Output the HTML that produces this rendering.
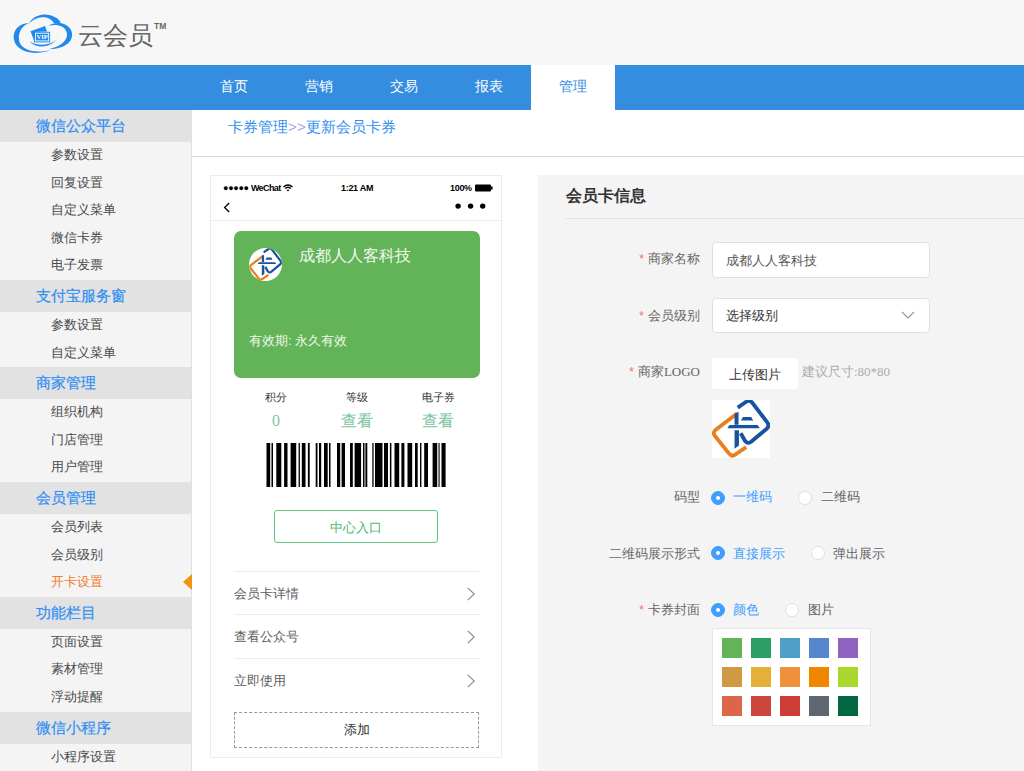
<!DOCTYPE html>
<html><head><meta charset="utf-8">
<style>
*{margin:0;padding:0;box-sizing:border-box}
html,body{width:1024px;height:771px;overflow:hidden;background:#fff;font-family:"Liberation Sans",sans-serif;color:#333}
.a{position:absolute}
#hdr{position:absolute;left:0;top:0;width:1024px;height:65px;background:#f7f7f7}
#brand{position:absolute;left:78px;top:19px;font-size:25px;line-height:32px;color:#666;white-space:nowrap}
#tm{position:absolute;left:154px;top:21px;font-size:8.5px;line-height:10px;color:#666;font-weight:bold}
#nav{position:absolute;left:0;top:65px;width:1024px;height:45px;background:#358de0}
.tab{position:absolute;top:0;width:85px;height:45px;line-height:43px;text-align:center;color:#fff;font-size:14px}
.tab.on{background:#fff;color:#358de0;width:84px}
#side{position:absolute;left:0;top:110px;width:192px;height:661px;background:#f4f4f4;border-right:1px solid #e0e0e0}
.sh{height:32px;line-height:31px;background:#e2e2e2;color:#2f8ef4;font-size:15px;font-weight:500;-webkit-text-stroke:0.2px #2f8ef4;padding-left:36px}
.si{height:27.6px;line-height:26.2px;font-size:13px;color:#4a4a4a;padding-left:51px}
.si.act{color:#f27d28}
#tri{position:absolute;left:183px;top:574px;width:0;height:0;border-right:9px solid #f39313;border-top:8.5px solid transparent;border-bottom:8.5px solid transparent}
#crumb{position:absolute;left:228px;top:117px;font-size:15.3px;color:#3490ee;line-height:20px;white-space:nowrap}
#hr{position:absolute;left:192px;top:156px;width:832px;height:1px;background:#d6d6d6}
#phone{position:absolute;left:210px;top:175px;width:292px;height:583px;border:1px solid #ececec;background:#fff}
.sb{position:absolute;top:6px;font-size:9px;line-height:12px;color:#000;font-weight:bold;letter-spacing:-0.3px;white-space:nowrap}
#card{position:absolute;left:23px;top:55px;width:246px;height:147px;background:#63b359;border-radius:7px}
.lst{position:absolute;left:23px;width:245px;height:44px;border-top:1px solid #ececec;font-size:13px;line-height:43px;color:#606060}
.chev{position:absolute;right:4.5px;top:14.5px}
#panel{position:absolute;left:538px;top:175px;width:486px;height:596px;background:#f4f4f4}
.lbl{position:absolute;font-size:13px;color:#666;line-height:16px;text-align:right;white-space:nowrap}
.req{color:#f56c6c;margin-right:4px;font-size:12px}
.inp{position:absolute;left:174px;width:218px;background:#fff;border:1px solid #dcdfe6;border-radius:4px;font-size:13px;color:#555;padding-left:13px;white-space:nowrap}
.rad{position:absolute;width:14px;height:14px;border-radius:50%;border:1px solid #dcdfe6;background:#fff}
.rad.on{background:#409eff;border-color:#409eff}
.rad.on:after{content:"";position:absolute;left:4px;top:4px;width:4px;height:4px;border-radius:50%;background:#fff}
.rt{position:absolute;font-size:13px;line-height:16px;color:#606266;white-space:nowrap}
.rt.on{color:#409eff}
.sw{position:absolute;width:20px;height:20px}
</style></head><body>
<div id="hdr">
 <svg class="a" style="left:10px;top:10px" width="66" height="48" viewBox="0 0 1024 745">
  <g fill="#2089ee">
  <path d="M300,200 C120,205 40,330 60,455 C85,610 300,735 625,625 C330,685 145,600 138,450 C130,320 200,235 300,200 Z"/>
  <path d="M290,215 C350,100 470,65 560,70 C680,80 760,140 790,195 L690,215 C650,140 580,112 510,112 C420,115 340,160 290,215 Z"/>
  <path d="M600,245 C700,180 890,180 955,330 C1000,470 880,600 600,610 C820,560 905,450 880,350 C850,240 720,215 600,245 Z"/>
  <path d="M308,488 C400,600 660,610 748,405 C705,545 450,580 308,488 Z"/>
  <path d="M318,330 L545,248 L575,335 L380,340 L372,470 Z"/>
  <rect x="372" y="338" width="250" height="165"/>
  </g>
  <rect x="395" y="360" width="205" height="120" fill="none" stroke="#fff" stroke-width="14"/>
  <text x="498" y="455" font-size="100" font-weight="bold" fill="#fff" text-anchor="middle" font-family="Liberation Serif">VIP</text>
 </svg>
 <div id="brand">云会员</div><div id="tm">TM</div>
</div>
<div id="nav">
 <div class="tab" style="left:191px">首页</div>
 <div class="tab" style="left:276px">营销</div>
 <div class="tab" style="left:361px">交易</div>
 <div class="tab" style="left:446px">报表</div>
 <div class="tab on" style="left:531px">管理</div>
</div>
<div id="side">
 <div class="sh">微信公众平台</div>
 <div class="si">参数设置</div><div class="si">回复设置</div><div class="si">自定义菜单</div><div class="si">微信卡券</div><div class="si">电子发票</div>
 <div class="sh">支付宝服务窗</div>
 <div class="si">参数设置</div><div class="si">自定义菜单</div>
 <div class="sh">商家管理</div>
 <div class="si">组织机构</div><div class="si">门店管理</div><div class="si">用户管理</div>
 <div class="sh">会员管理</div>
 <div class="si">会员列表</div><div class="si">会员级别</div><div class="si act">开卡设置</div>
 <div class="sh">功能栏目</div>
 <div class="si">页面设置</div><div class="si">素材管理</div><div class="si">浮动提醒</div>
 <div class="sh">微信小程序</div>
 <div class="si">小程序设置</div>
</div>
<div id="tri"></div>
<div id="crumb">卡券管理<span style="color:#a9a3e6">&gt;&gt;</span>更新会员卡券</div>
<div id="hr"></div>

<svg width="0" height="0" style="position:absolute"><defs>
 <symbol id="klogo" viewBox="25 25 721 721">
  <path d="M340,190 L72,395 Q28,430 62,472 L238,692 Q272,735 316,702 L450,612" stroke="#e8801f" stroke-width="48" fill="none"/>
  <path d="M345,120 L450,47 Q490,20 524,57 L710,300 Q745,345 705,382 L515,542 Q470,578 436,535 L382,438" stroke="#17539f" stroke-width="48" fill="none"/>
  <path d="M305,200 L355,172 L355,332 L305,332 Z M215,375 L242,336 L592,336 L620,375 Z M305,400 L360,400 L360,592 L305,632 Z M385,280 L410,235 L512,235 L538,280 Z" fill="#17539f"/>
 </symbol>
</defs></svg>

<div id="phone">
 <div class="sb" style="left:12px">●●●●● <span style="letter-spacing:-0.6px">WeChat</span></div>
 <svg class="a" style="left:72px;top:8px" width="10" height="8" viewBox="0 0 10 8"><path d="M0.5,3 Q5,-1 9.5,3" stroke="#000" stroke-width="1.4" fill="none"/><path d="M2.2,4.6 Q5,2 7.8,4.6" stroke="#000" stroke-width="1.4" fill="none"/><path d="M3.6,6 L5,7.6 L6.4,6 Q5,4.8 3.6,6Z" fill="#000"/></svg>
 <div class="sb" style="left:130px">1:21 AM</div>
 <div class="sb" style="left:239px">100%</div>
 <svg class="a" style="left:264px;top:8px" width="18" height="8" viewBox="0 0 18 8"><rect x="0" y="0.5" width="16" height="7" rx="1" fill="#000"/><rect x="16" y="2.5" width="1.6" height="3" fill="#000"/></svg>
 <svg class="a" style="left:12px;top:26px" width="8" height="11" viewBox="0 0 8 11"><path d="M6.2,1 L1.6,5.5 L6.2,10" stroke="#000" stroke-width="1.3" fill="none"/></svg>
 <svg class="a" style="left:244px;top:27px" width="32" height="7" viewBox="0 0 32 7"><circle cx="3.1" cy="3.1" r="2.7"/><circle cx="15.6" cy="3.1" r="2.7"/><circle cx="27.7" cy="3.1" r="2.7"/></svg>
 <div class="a" style="left:0;top:44px;width:290px;height:1px;background:#ececec"></div>
 <div id="card">
  <div class="a" style="left:15px;top:17px;width:33px;height:33px;border-radius:50%;background:#fff;overflow:hidden"><svg width="33" height="33" style="position:absolute;left:0;top:0"><use href="#klogo" x="0" y="0" width="33" height="33"/></svg></div>
  <div class="a" style="left:65px;top:15px;font-family:'Liberation Serif',serif;font-size:16px;line-height:20px;color:#f2f8ef;white-space:nowrap">成都人人客科技</div>
  <div class="a" style="left:15px;top:102px;font-size:13px;line-height:16px;color:#eef7ea;white-space:nowrap">有效期: 永久有效</div>
 </div>
 <div class="a" style="left:0;top:214px;width:290px;font-size:11px;line-height:14px;color:#333">
  <div class="a" style="left:40px;width:50px;text-align:center">积分</div>
  <div class="a" style="left:121px;width:50px;text-align:center">等级</div>
  <div class="a" style="left:202px;width:50px;text-align:center">电子券</div>
 </div>
 <div class="a" style="left:0;top:235px;width:290px;font-family:'Liberation Serif',serif;font-size:16px;line-height:20px;color:#7ac69f">
  <div class="a" style="left:40px;width:50px;text-align:center">0</div>
  <div class="a" style="left:121px;width:50px;text-align:center">查看</div>
  <div class="a" style="left:202px;width:50px;text-align:center">查看</div>
 </div>
 <svg class="a" style="left:55px;top:267px" width="182" height="44" viewBox="0 0 182 44" fill="#000"><rect x="0.5" y="0" width="3.7" height="44"/><rect x="5.5" y="0" width="1.5" height="44"/><rect x="10.3" y="0" width="5.0" height="44"/><rect x="18.1" y="0" width="3.4" height="44"/><rect x="24.6" y="0" width="5.6" height="44"/><rect x="32.6" y="0" width="1.3" height="44"/><rect x="35.8" y="0" width="3.7" height="44"/><rect x="41.9" y="0" width="1.8" height="44"/><rect x="49.7" y="0" width="1.8" height="44"/><rect x="53.0" y="0" width="2.2" height="44"/><rect x="58.0" y="0" width="3.7" height="44"/><rect x="63.0" y="0" width="1.5" height="44"/><rect x="71.0" y="0" width="3.2" height="44"/><rect x="75.6" y="0" width="3.4" height="44"/><rect x="84.0" y="0" width="2.8" height="44"/><rect x="88.6" y="0" width="6.5" height="44"/><rect x="97.0" y="0" width="1.5" height="44"/><rect x="99.4" y="0" width="1.9" height="44"/><rect x="106.3" y="0" width="1.3" height="44"/><rect x="109.0" y="0" width="7.5" height="44"/><rect x="118.0" y="0" width="4.0" height="44"/><rect x="123.9" y="0" width="1.5" height="44"/><rect x="128.5" y="0" width="4.7" height="44"/><rect x="135.4" y="0" width="3.0" height="44"/><rect x="141.5" y="0" width="4.7" height="44"/><rect x="149.0" y="0" width="2.7" height="44"/><rect x="154.0" y="0" width="1.4" height="44"/><rect x="158.2" y="0" width="3.8" height="44"/><rect x="166.6" y="0" width="4.6" height="44"/><rect x="172.5" y="0" width="1.1" height="44"/><rect x="175.5" y="0" width="4.1" height="44"/></svg>
 <div class="a" style="left:63px;top:334px;width:164px;height:33px;border:1px solid #5cc67c;border-radius:3px;text-align:center;line-height:33px;font-size:13px;color:#4fb86d">中心入口</div>
 <div class="lst" style="top:395px">会员卡详情<svg class="chev" width="8" height="14" viewBox="0 0 8 14"><path d="M0.8,0.8 L7.2,7 L0.8,13.2" stroke="#888" stroke-width="1.1" fill="none"/></svg></div>
 <div class="lst" style="top:438px">查看公众号<svg class="chev" width="8" height="14" viewBox="0 0 8 14"><path d="M0.8,0.8 L7.2,7 L0.8,13.2" stroke="#888" stroke-width="1.1" fill="none"/></svg></div>
 <div class="lst" style="top:482px">立即使用<svg class="chev" width="8" height="14" viewBox="0 0 8 14"><path d="M0.8,0.8 L7.2,7 L0.8,13.2" stroke="#888" stroke-width="1.1" fill="none"/></svg></div>
 <div class="a" style="left:23px;top:536px;width:245px;height:36px;border:1px dashed #999;text-align:center;line-height:34px;font-size:13px;color:#333">添加</div>
</div>

<div id="panel">
 <div class="a" style="left:28px;top:11px;font-size:15.5px;font-weight:bold;line-height:20px;color:#333;white-space:nowrap">会员卡信息</div>
 <div class="a" style="left:28px;top:43px;width:458px;height:1px;background:#e2e2e2"></div>
 <div class="lbl" style="right:324px;top:76px"><span class="req">*</span>商家名称</div>
 <div class="inp" style="top:67px;height:36px;line-height:36px">成都人人客科技</div>
 <div class="lbl" style="right:324px;top:133px"><span class="req">*</span>会员级别</div>
 <div class="inp" style="top:123px;height:35px;line-height:34px;color:#333">选择级别<svg class="a" style="left:188px;top:12px" width="14" height="9" viewBox="0 0 14 9"><path d="M1,1 L7,7 L13,1" stroke="#999" stroke-width="1.2" fill="none"/></svg></div>
 <div class="lbl" style="right:324px;top:189px"><span class="req">*</span>商家<span style="font-family:'Liberation Serif',serif">LOGO</span></div>
 <div class="a" style="left:174px;top:183px;width:86px;height:31px;background:#fff;border-radius:3px;font-size:13px;line-height:33px;text-align:center;color:#333">上传图片</div>
 <div class="a" style="left:264px;top:189px;font-size:13px;line-height:16px;color:#aaa;white-space:nowrap">建议尺寸<span style="font-family:'Liberation Serif',serif">:80*80</span></div>
 <div class="a" style="left:174px;top:225px;width:58px;height:58px;background:#fff"><svg width="58" height="58"><use href="#klogo" x="0" y="0" width="58" height="58"/></svg></div>

 <div class="lbl" style="right:324px;top:314px">码型</div>
 <div class="rad on" style="left:173px;top:316px"></div><div class="rt on" style="left:195px;top:314px">一维码</div>
 <div class="rad" style="left:260px;top:316px"></div><div class="rt" style="left:283px;top:314px">二维码</div>

 <div class="lbl" style="right:324px;top:371px">二维码展示形式</div>
 <div class="rad on" style="left:173px;top:371px"></div><div class="rt on" style="left:195px;top:371px">直接展示</div>
 <div class="rad" style="left:273px;top:371px"></div><div class="rt" style="left:295px;top:371px">弹出展示</div>

 <div class="lbl" style="right:324px;top:427px"><span class="req">*</span>卡券封面</div>
 <div class="rad on" style="left:173px;top:428px"></div><div class="rt on" style="left:195px;top:427px">颜色</div>
 <div class="rad" style="left:247px;top:428px"></div><div class="rt" style="left:270px;top:427px">图片</div>

 <div class="a" style="left:174px;top:453px;width:159px;height:98px;background:#fff;border:1px solid #e6e6e6">
  <div class="sw" style="left:9px;top:9px;background:#63b359"></div>
  <div class="sw" style="left:38px;top:9px;background:#2c9f67"></div>
  <div class="sw" style="left:67px;top:9px;background:#509fc9"></div>
  <div class="sw" style="left:96px;top:9px;background:#5885cf"></div>
  <div class="sw" style="left:125px;top:9px;background:#9062c0"></div>
  <div class="sw" style="left:9px;top:38px;background:#d09a45"></div>
  <div class="sw" style="left:38px;top:38px;background:#e4b138"></div>
  <div class="sw" style="left:67px;top:38px;background:#ee903c"></div>
  <div class="sw" style="left:96px;top:38px;background:#f08500"></div>
  <div class="sw" style="left:125px;top:38px;background:#a9d92d"></div>
  <div class="sw" style="left:9px;top:67px;background:#dd6549"></div>
  <div class="sw" style="left:38px;top:67px;background:#cc463d"></div>
  <div class="sw" style="left:67px;top:67px;background:#cf3e36"></div>
  <div class="sw" style="left:96px;top:67px;background:#5e6671"></div>
  <div class="sw" style="left:125px;top:67px;background:#026842"></div>
 </div>
</div>
</body></html>
